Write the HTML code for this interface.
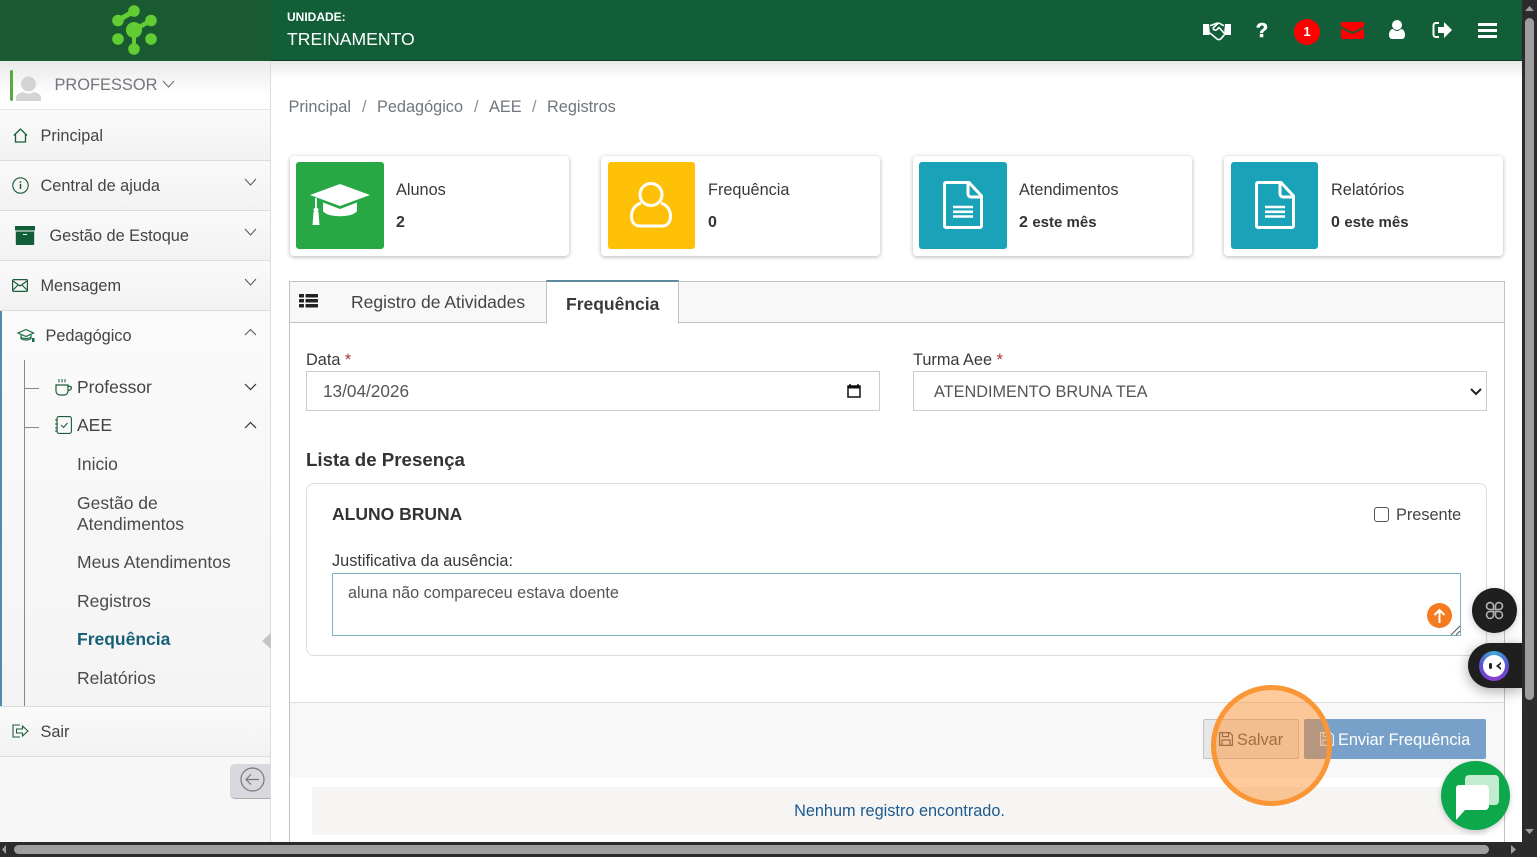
<!DOCTYPE html>
<html lang="pt-BR"><head><meta charset="utf-8"><title>Frequência</title>
<style>
*{box-sizing:border-box}
html,body{margin:0;padding:0;width:1537px;height:857px;overflow:hidden;background:#fff}
body{font-family:"Liberation Sans",sans-serif;font-size:16.3px;color:#333;position:relative}
.a{position:absolute;white-space:nowrap}
svg{position:absolute;overflow:visible}
.t{line-height:20px;color:#444}
.card{position:absolute;top:156px;width:279px;height:100px;background:#fff;border-radius:4px;box-shadow:0 1px 4px rgba(0,0,0,.3)}
.sq{position:absolute;left:6px;top:6px;width:88px;height:87px;border-radius:3px}
.card .l{position:absolute;left:106px;top:24px;line-height:20px;color:#3a3a3a;white-space:nowrap}
.card .v{position:absolute;left:106px;top:57px;line-height:20px;font-weight:700;color:#333;white-space:nowrap;font-size:16px}
.card .v small{font-size:15px}
.c2 .sq{left:7px;width:87px}
.c2 .l,.c2 .v{left:107px}
.si{position:absolute;left:0;width:270px;border-bottom:1px solid #dcdcdc;background:linear-gradient(#fafafa,#f2f2f2)}
.m{font-size:17.5px;line-height:22px;color:#4a4a4a}
</style></head><body>

<!-- main bg -->
<div class="a" style="left:271px;top:61px;width:1251px;height:30px;background:linear-gradient(#e8e8e8,#fff 60%)"></div>

<!-- header -->
<div class="a" style="left:0;top:0;width:271px;height:61px;background:#1a5a30"></div>
<div class="a" style="left:271px;top:0;width:1251px;height:61px;background:#115e38;border-bottom:1px solid #0b3d24"></div>
<svg style="left:0;top:0" width="271" height="61" viewBox="0 0 271 61">
 <g stroke="#62cc34" fill="none"><path d="M118 20.500 134 11" stroke-width="5"/><path d="M134 30 151 20.500" stroke-width="4.500"/><path d="M134 30V49" stroke-width="4"/></g>
 <g fill="#62cc34"><circle cx="134" cy="11" r="5.800"/><circle cx="118" cy="20.500" r="5.800"/><circle cx="151" cy="20.500" r="5.800"/><circle cx="134" cy="30" r="8"/><circle cx="118" cy="39" r="5.800"/><circle cx="151" cy="39" r="5.800"/><circle cx="134" cy="49" r="5.800"/></g>
</svg>
<div class="a" style="left:287px;top:10px;font-size:12px;font-weight:700;color:#fff;line-height:14px">UNIDADE:</div>
<div class="a" style="left:287px;top:29px;font-size:17.600px;color:#fff;line-height:21px">TREINAMENTO</div>

<!-- header icons -->
<svg style="left:1203px;top:21px" width="28" height="20" viewBox="0 0 28 20" fill="none" stroke="#fff" stroke-width="1.600"><path d="M0 3h6l1 10-1 1H0zM28 3h-6l-1 10 1 1h6z" fill="#fff" stroke="none"/><path d="M7 4.500c3 0 5-2.500 8-2.500 2.500 0 4 2.500 6 2.500M7 12l7 6c1.500 1 3 .6 4-.3l3.500-4M15 2.500l-4.500 4c-1 2 1.500 3.500 3.500 2l2-2 5.500 6"/></svg>
<div class="a" style="left:1255px;top:19px;font-size:20px;line-height:24px;font-weight:700;color:#fff;width:14px;text-align:center;-webkit-text-stroke:.6px #fff">?</div>
<div class="a" style="left:1294px;top:19px;width:26px;height:26px;border-radius:50%;background:#f00;color:#fff;font-size:13px;font-weight:700;line-height:26px;text-align:center">1</div>
<svg style="left:1341px;top:22px" width="23" height="17" viewBox="0 0 23 17"><path d="M1 0h21a1 1 0 0 1 1 1v3.500L11.500 10 0 4.500V1a1 1 0 0 1 1-1zM0 6.500l11.500 5.500L23 6.500V16a1 1 0 0 1-1 1H1a1 1 0 0 1-1-1z" fill="#f00"/></svg>
<svg style="left:1389px;top:20px" width="16" height="19" viewBox="0 0 16 19" fill="#fff"><circle cx="8" cy="5" r="5"/><path d="M0 15c0-4 2-6 4-6 1 1 2.500 2 4 2s3-1 4-2c2 0 4 2 4 6 0 2-1 4-3 4H3c-2 0-3-2-3-4z"/></svg>
<svg style="left:1432px;top:21px" width="20" height="18" viewBox="0 0 20 18"><path d="M7 2H4a2.500 2.500 0 0 0-2.500 2.500v9A2.500 2.500 0 0 0 4 16h3" fill="none" stroke="#fff" stroke-width="2"/><path d="M6 6h6V1l8 8-8 8v-5H6z" fill="#fff"/></svg>
<svg style="left:1478px;top:23px" width="19" height="15" viewBox="0 0 19 15" fill="#fff"><rect width="19" height="3"/><rect y="6" width="19" height="3"/><rect y="12" width="19" height="3"/></svg>

<!-- sidebar -->
<div class="a" style="left:0;top:61px;width:271px;height:781px;background:#f7f7f7;border-right:1px solid #ddd"></div>
<div class="si" style="top:61px;height:49px;background:linear-gradient(#e9e9e9,#fff 70%);border-bottom:1px solid #e6e6e6"></div>
<div class="a" style="left:10px;top:70px;width:3px;height:31px;background:#5aa83f;border-radius:2px"></div>
<svg style="left:15px;top:75px" width="27" height="26" viewBox="0 0 27 26" fill="#d4d4d4"><circle cx="13.500" cy="9" r="7.500"/><path d="M1 26v-4c0-3 4-4 7-5 3 2 8 2 11 0 3 1 7 2 7 5v4z"/></svg>
<div class="a t" style="left:54.500px;top:75px;color:#75757f;font-size:16.400px">PROFESSOR</div>
<svg style="left:162px;top:80px" width="13" height="8" fill="none" stroke="#666" stroke-width="1"><path d="M1 1l5.500 6L12 1"/></svg>

<div class="si" style="top:110px;height:51px"></div>
<svg style="left:13px;top:128px" width="15" height="15" viewBox="0 0 15 15" fill="none" stroke="#1a5c38" stroke-width="1.300"><path d="M.8 7.500 7.500 1 14 7.500M2.500 6.500V14h10V6.500"/></svg>
<div class="a t" style="left:40.500px;top:126px">Principal</div>

<div class="si" style="top:161px;height:50px"></div>
<svg style="left:12px;top:177px" width="17" height="17" viewBox="0 0 17 17" fill="none" stroke="#1a5c38" stroke-width="1.100"><circle cx="8.500" cy="8.500" r="7.700"/><path d="M8.500 7v5M8.500 4.200v1.500" stroke-width="1.500"/></svg>
<div class="a t" style="left:40.500px;top:176px">Central de ajuda</div>

<div class="si" style="top:211px;height:50px"></div>
<svg style="left:15px;top:226px" width="20" height="19" viewBox="0 0 20 19" fill="#115e38"><rect width="20" height="4.500" rx=".5"/><path d="M.8 5.500h18.400V18a1 1 0 0 1-1 1H1.800a1 1 0 0 1-1-1z"/><rect x="8" y="8" width="4" height="1" fill="#fff"/></svg>
<div class="a t" style="left:49.500px;top:226px">Gestão de Estoque</div>

<div class="si" style="top:261px;height:50px"></div>
<svg style="left:12px;top:279px" width="16" height="13" viewBox="0 0 16 13" fill="none" stroke="#1a5c38" stroke-width="1.200"><rect x=".6" y=".6" width="14.800" height="11.800" rx="1"/><path d="M1 2l7 5 7-5M1 11l5-5M15 11l-5-5"/></svg>
<div class="a t" style="left:40.500px;top:276px">Mensagem</div>

<div class="si" style="top:311px;height:396px;background:linear-gradient(#fafafa,#f4f4f4)"></div>
<div class="a" style="left:0;top:311px;width:2px;height:395px;background:#4f8cab"></div>
<svg style="left:17px;top:328px" width="18" height="15" viewBox="0 0 18 15" fill="none" stroke="#1a6a42" stroke-width="1.200"><path d="M1 5 9 1.500 16.500 5 9 8.500z"/><path d="M4 7v3.500c2 2 8 2 10 0V7"/><path d="M4 9c2 2 8 2 10 0"/><rect x="15" y="10" width="2.500" height="4" fill="#1a6a42" stroke="none"/></svg>
<div class="a t" style="left:45.500px;top:326px">Pedagógico</div>

<div class="a" style="left:24px;top:360px;width:1px;height:346px;background:#888"></div>
<div class="a" style="left:25px;top:388px;width:14px;height:1px;background:#888"></div>
<div class="a" style="left:25px;top:427px;width:14px;height:1px;background:#888"></div>

<svg style="left:54px;top:378px" width="19" height="18" viewBox="0 0 19 18" fill="none" stroke="#1a5c38" stroke-width="1.200"><path d="M2 7h12v6c0 2-1.500 4-3.500 4h-5C3.500 17 2 15 2 13zM14 8.500c3-1 4 1 3 2.500-.6 1-1.800 1.500-3 1.500"/><path d="M5 1v3.500M8 1v3.500M11 1v3.500" stroke-width="1"/></svg>
<div class="a m" style="left:77px;top:376px;color:#444">Professor</div>
<svg style="left:55px;top:416px" width="17" height="18" viewBox="0 0 17 18" fill="none" stroke="#1a5c38" stroke-width="1.100"><rect x="2" y=".6" width="14.400" height="16.800" rx="2"/><path d="M0 4h3M0 8h3M0 12h3M0 15h3"/><path d="M6 9l2.500 2.500L12.500 7"/></svg>
<div class="a m" style="left:77px;top:414px;color:#444">AEE</div>
<div class="a m" style="left:77px;top:453px">Inicio</div>
<div class="a m" style="left:77px;top:493px;line-height:21px">Gestão de<br>Atendimentos</div>
<div class="a m" style="left:77px;top:551px">Meus Atendimentos</div>
<div class="a m" style="left:77px;top:590px">Registros</div>
<div class="a m" style="left:77px;top:628px;font-weight:700;color:#176076">Frequência</div>
<div class="a m" style="left:77px;top:667px">Relatórios</div>
<svg style="left:262px;top:633px" width="9" height="16"><path d="M9 0v16L0 8z" fill="#c4c4c4"/></svg>

<!-- chevrons -->
<svg style="left:0;top:0" width="271" height="440" fill="none" stroke="#555" stroke-width="1">
 <path d="M245 179l5.500 6 5.500-6M245 229l5.500 6 5.500-6M245 279l5.500 6 5.500-6M245 335l5.500-5.500 5.500 5.500"/>
 <path d="M245 384l5.500 5.500 5.500-5.500M245 428l5.500-5.500 5.500 5.500" stroke="#333" stroke-width="1.200"/>
</svg>

<div class="si" style="top:707px;height:50px"></div>
<svg style="left:12px;top:724px" width="17" height="14" viewBox="0 0 17 14" fill="none" stroke="#1a5c38" stroke-width="1.100"><path d="M8 1H1v12h7M4.500 5h6V2l5.500 5-5.500 5V9h-6z"/></svg>
<div class="a t" style="left:40.500px;top:722px">Sair</div>

<div class="a" style="left:230px;top:764px;width:40px;height:35px;background:#d8d9de;border-radius:5px 0 0 5px;border-bottom:1px solid #aaa"></div>
<svg style="left:240px;top:767px" width="25" height="25" viewBox="0 0 25 25" fill="none" stroke="#777" stroke-width="1.200"><circle cx="12.500" cy="12.500" r="11.500"/><path d="M19 12.500H6M11 7.500l-5 5 5 5"/></svg>

<!-- breadcrumb -->
<div class="a" style="left:288.500px;top:97px;line-height:20px;color:#6f767c">Principal</div>
<div class="a" style="left:362px;top:97px;line-height:20px;color:#8b9197">/</div>
<div class="a" style="left:377px;top:97px;line-height:20px;color:#6f767c">Pedagógico</div>
<div class="a" style="left:474px;top:97px;line-height:20px;color:#8b9197">/</div>
<div class="a" style="left:489px;top:97px;line-height:20px;color:#6f767c">AEE</div>
<div class="a" style="left:532px;top:97px;line-height:20px;color:#8b9197">/</div>
<div class="a" style="left:547px;top:97px;line-height:20px;color:#6f767c">Registros</div>

<!-- cards -->
<div class="card" style="left:290px"><div class="sq" style="background:#28a745"></div><div class="l">Alunos</div><div class="v">2</div>
 <svg style="left:20px;top:28px" width="60" height="42" viewBox="0 0 60 42" fill="#fff"><path d="M30 0 60 11 30 22 0 11z"/><path d="M13 18.500 30 25l17-6.500V27c-4 7-30 7-34 0z"/><rect x="5" y="14" width="1.800" height="12"/><circle cx="6" cy="26" r="2.500"/><path d="M3.500 28h5l1 13h-7z"/></svg></div>
<div class="card c2" style="left:601px"><div class="sq" style="background:#ffc107"></div><div class="l">Frequência</div><div class="v">0</div>
 <svg style="left:29px;top:26px" width="42" height="46" viewBox="0 0 42 46" fill="none" stroke="#fff" stroke-width="3"><circle cx="21" cy="12.500" r="11"/><path d="M11 21C5 23 1.500 28 1.500 34c0 6 3 10 8 10h23c5 0 8-4 8-10 0-6-3.500-11-9.500-13"/></svg></div>
<div class="card" style="left:913px"><div class="sq" style="background:#1aa2b8"></div><div class="l">Atendimentos</div><div class="v">2 <small>este mês</small></div>
 <svg style="left:30px;top:25px" width="42" height="48" viewBox="0 0 42 48" fill="none" stroke="#fff" stroke-width="3"><path d="M26 1.500H3A1.500 1.500 0 0 0 1.500 3v42A1.500 1.500 0 0 0 3 46.500h34a1.500 1.500 0 0 0 1.500-1.500V15z"/><path d="M25 1.500V13a3 3 0 0 0 3 3h10.500"/><path d="M10 26h20M10 30.800h20M10 35.500h20" stroke-width="2.600"/></svg></div>
<div class="card c2" style="left:1224px"><div class="sq" style="background:#1aa2b8"></div><div class="l">Relatórios</div><div class="v">0 <small>este mês</small></div>
 <svg style="left:30.500px;top:25px" width="42" height="48" viewBox="0 0 42 48" fill="none" stroke="#fff" stroke-width="3"><path d="M26 1.500H3A1.500 1.500 0 0 0 1.500 3v42A1.500 1.500 0 0 0 3 46.500h34a1.500 1.500 0 0 0 1.500-1.500V15z"/><path d="M25 1.500V13a3 3 0 0 0 3 3h10.500"/><path d="M10 26h20M10 30.800h20M10 35.500h20" stroke-width="2.600"/></svg></div>

<!-- tab panel -->
<div class="a" style="left:289px;top:281px;width:1216px;height:561px;background:#fff;border:1px solid #c3c3c3;border-bottom:0"></div>
<div class="a" style="left:290px;top:282px;width:1214px;height:41px;background:#f8f8f8;border-bottom:1px solid #c3c3c3"></div>
<svg style="left:299px;top:294px" width="19" height="14" viewBox="0 0 19 14" fill="#222"><rect width="5" height="3.500" rx=".6"/><rect x="6.500" width="12.500" height="3.500" rx=".6"/><rect y="5" width="5" height="3.500" rx=".6"/><rect x="6.500" y="5" width="12.500" height="3.500" rx=".6"/><rect y="10" width="5" height="3.500" rx=".6"/><rect x="6.500" y="10" width="12.500" height="3.500" rx=".6"/></svg>
<div class="a" style="left:351px;top:291px;line-height:22px;font-size:17.500px;color:#444">Registro de Atividades</div>
<div class="a" style="left:546px;top:280px;width:133px;height:44px;background:#fff;border:1px solid #c3c3c3;border-top:2px solid #5e8aa0;border-bottom:0"></div>
<div class="a" style="left:566px;top:293px;line-height:22px;font-size:17.500px;font-weight:700;color:#3a3a3a">Frequência</div>

<!-- form -->
<div class="a" style="left:306px;top:350px;line-height:20px;color:#3a3a3a">Data <span style="color:#a33">*</span></div>
<div class="a" style="left:306px;top:371px;width:574px;height:40px;border:1px solid #ccc"></div>
<div class="a" style="left:323px;top:381px;line-height:20px;color:#555;font-size:17.200px">13/04/2026</div>
<svg style="left:847px;top:384px" width="14" height="14" viewBox="0 0 14 14"><path d="M3 0v2M11 0v2" stroke="#111" stroke-width="1.500"/><rect x="1" y="2" width="12" height="11" fill="none" stroke="#111" stroke-width="1.500"/><rect x="1" y="2" width="12" height="2.500" fill="#111"/></svg>
<div class="a" style="left:913px;top:350px;line-height:20px;color:#3a3a3a">Turma Aee <span style="color:#a33">*</span></div>
<div class="a" style="left:913px;top:371px;width:574px;height:40px;border:1px solid #ccc"></div>
<div class="a" style="left:934px;top:382px;line-height:20px;color:#555;font-size:16.300px">ATENDIMENTO BRUNA TEA</div>
<svg style="left:1470px;top:388px" width="12" height="8" fill="none" stroke="#222" stroke-width="2"><path d="M1 1l5 5 5-5"/></svg>

<div class="a" style="left:306px;top:449px;line-height:21px;font-size:18.700px;font-weight:700;color:#333">Lista de Presença</div>
<div class="a" style="left:306px;top:483px;width:1181px;height:173px;border:1px solid #ddd;border-radius:8px;background:#fff"></div>
<div class="a" style="left:332px;top:504px;line-height:21px;font-size:17.500px;font-weight:700;color:#333">ALUNO BRUNA</div>
<div class="a" style="left:1374px;top:507px;width:15px;height:15px;border:1px solid #555;border-radius:3px;background:#fff"></div>
<div class="a" style="left:1396px;top:506px;line-height:18px;color:#444">Presente</div>
<div class="a" style="left:332px;top:552px;line-height:18px;color:#3a3a3a">Justificativa da ausência:</div>
<div class="a" style="left:332px;top:573px;width:1129px;height:63px;border:1px solid #7db0c2;background:#fff"></div>
<div class="a" style="left:348px;top:584px;line-height:18px;color:#555;font-size:16.200px">aluna não compareceu estava doente</div>
<svg style="left:1451px;top:626px" width="9" height="9" stroke="#555" stroke-width="1"><path d="M0 9 9 0M5 9 9 5"/></svg>
<div class="a" style="left:1427px;top:603px;width:25px;height:25px;border-radius:50%;background:#f47b20"></div>
<svg style="left:1433px;top:608px" width="13" height="15" viewBox="0 0 13 15" fill="none" stroke="#fff" stroke-width="2"><path d="M6.500 15V2M1.500 7l5-5 5 5"/></svg>

<!-- footer -->
<div class="a" style="left:290px;top:702px;width:1214px;height:76px;background:#f8f8f8;border-top:1px solid #ddd"></div>
<div class="a" style="left:1203px;top:719px;width:96px;height:40px;background:#e7e7e7;border:1px solid #c4c4c4;border-radius:2px"></div>
<svg style="left:1219px;top:732px" width="14" height="14" viewBox="0 0 14 14" fill="none" stroke="#555" stroke-width="1.200"><path d="M.6.6h10l2.800 2.800v10H.6zM3.500.6v4h6v-4M3 13.400V8h8v5.400"/></svg>
<div class="a" style="left:1237px;top:731px;line-height:18px;color:#555">Salvar</div>
<div class="a" style="left:1304px;top:719px;width:182px;height:40px;background:#77a1c9;border-radius:2px"></div>
<svg style="left:1320px;top:732px" width="14" height="14" viewBox="0 0 14 14" fill="none" stroke="#e8eef5" stroke-width="1.200"><path d="M.6.6h10l2.800 2.800v10H.6zM3.500.6v4h6v-4M3 13.400V8h8v5.400"/></svg>
<div class="a" style="left:1338px;top:731px;line-height:18px;color:#fff">Enviar Frequência</div>
<div class="a" style="left:312px;top:787px;width:1175px;height:48px;background:#f6f5f3"></div>
<div class="a" style="left:312px;top:802px;width:1175px;text-align:center;line-height:18px;color:#1d5a8f">Nenhum registro encontrado.</div>

<!-- orange highlight -->
<div class="a" style="left:1211px;top:685px;width:121px;height:121px;border-radius:50%;background:rgba(255,140,40,.46);border:5px solid #fb9637"></div>

<!-- widgets -->
<div class="a" style="left:1472px;top:588px;width:45px;height:45px;border-radius:50%;background:#1f1f1f;box-shadow:0 2px 8px rgba(0,0,0,.2)"></div>
<svg style="left:1485px;top:601px" width="19" height="19" viewBox="0 0 19 19" fill="none" stroke="#b5b5b5" stroke-width="1.600"><path d="M8.500 8.500H4.500a3.500 3.500 0 1 1 4-4zM10.500 8.500V4.500a3.500 3.500 0 1 1 4 4zM8.500 10.500v4a3.500 3.500 0 1 1-4-4zM10.500 10.500h4a3.500 3.500 0 1 1-4 4z"/></svg>
<div class="a" style="left:1468px;top:643px;width:54px;height:45px;border-radius:23px 0 0 23px;background:#1f1f1f;box-shadow:0 3px 14px rgba(0,0,0,.35)"></div>
<div class="a" style="left:1479px;top:651px;width:30px;height:30px;border-radius:50%;background:conic-gradient(#3fa9d8,#5a4fd0,#8a3fd0,#5a4fd0,#3fa9d8)"></div>
<div class="a" style="left:1483px;top:655px;width:22px;height:22px;border-radius:50%;background:#fff"></div>
<svg style="left:1488px;top:661px" width="14" height="10" fill="#222"><rect x="1" y="2" width="3" height="6" rx="1.500"/><path d="M13 1 8 5l5 4V7l-2-2 2-2z"/></svg>

<div class="a" style="left:1441px;top:761px;width:69px;height:69px;border-radius:50%;background:#0ca84b;box-shadow:0 2px 6px rgba(0,0,0,.2)"></div>
<svg style="left:1455px;top:775px" width="45" height="46" viewBox="0 0 45 46"><rect x="10" y="0" width="34" height="30" rx="4" fill="#c2ebd0"/><path d="M4 10h26a4 4 0 0 1 4 4v17a4 4 0 0 1-4 4H10L1 45V13a3 3 0 0 1 3-3z" fill="#fff"/></svg>

<!-- scrollbars -->
<div class="a" style="left:1522px;top:0;width:15px;height:857px;background:#2b2b2b"></div>
<div class="a" style="left:1525px;top:18px;width:9px;height:682px;border-radius:5px;background:#9e9e9e"></div>
<svg style="left:1522px;top:0" width="15" height="857" fill="#9e9e9e"><path d="M7.500 6 12 11H3zM7.500 834 12 829H3z"/></svg>
<div class="a" style="left:0;top:842px;width:1537px;height:15px;background:#2b2b2b"></div>
<div class="a" style="left:14px;top:845px;width:1475px;height:9px;border-radius:5px;background:#9e9e9e"></div>
<svg style="left:0;top:842px" width="1537" height="15" fill="#9e9e9e"><path d="M2 7.500 6 3v9zM1516 7.500 1511 3v9z"/></svg>
</body></html>
